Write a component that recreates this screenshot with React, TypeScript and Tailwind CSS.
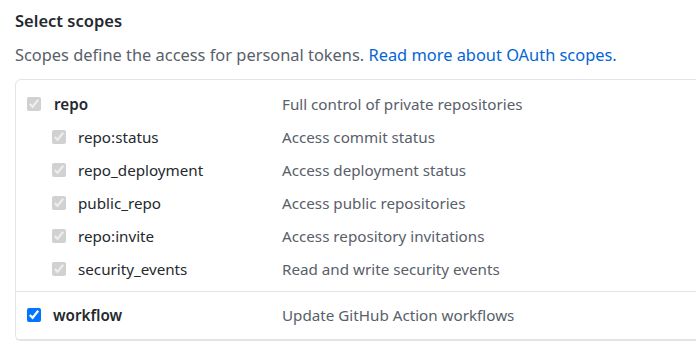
import React from "react";

type Scope = { name: string; desc: string };

const repoScopes: Scope[] = [
  { name: "repo:status", desc: "Access commit status" },
  { name: "repo_deployment", desc: "Access deployment status" },
  { name: "public_repo", desc: "Access public repositories" },
  { name: "repo:invite", desc: "Access repository invitations" },
  { name: "security_events", desc: "Read and write security events" },
];

function Check({ checked, disabled }: { checked?: boolean; disabled?: boolean }) {
  return (
    <input
      type="checkbox"
      defaultChecked={checked}
      disabled={disabled}
      className="m-0 w-[14px] h-[14px] shrink-0 accent-[#0075ff]"
    />
  );
}

export default function App() {
  return (
    <div
      className="w-[696px] h-[343px] overflow-hidden bg-white text-[#24292e]"
      style={{ fontFamily: '"Noto Sans", "Open Sans", sans-serif' }}
    >
      <div className="pl-[15px] pt-[7px]">
        <h3 className="text-[16.5px] font-semibold leading-[28px]">Select scopes</h3>
        <p className="mt-[6px] text-[16.4px] leading-[28px] text-[#586069]">
          Scopes define the access for personal tokens.{" "}
          <a href="#" className="text-[#0366d6]">
            Read more about OAuth scopes.
          </a>
        </p>

        {/* Scopes box */}
        <div className="mt-[10px] w-[760px] border border-[#e1e4e8] rounded-[6px] text-[15.2px]">
          {/* repo group */}
          <div className="border-b border-[#e1e4e8] pt-[8px] pb-[5px] pl-[11px]">
            <div className="flex items-center h-[33px]">
              <div className="flex items-center gap-[13px] w-[255px]">
                <Check checked disabled />
                <span className="font-semibold text-[#24292e]">repo</span>
              </div>
              <span className="text-[#586069]">Full control of private repositories</span>
            </div>
            {repoScopes.map((s) => (
              <div key={s.name} className="flex items-center h-[33px] pl-[25px]">
                <div className="flex items-center gap-[12px] w-[230px]">
                  <Check checked disabled />
                  <span className="text-[#24292e]">{s.name}</span>
                </div>
                <span className="text-[#586069]">{s.desc}</span>
              </div>
            ))}
          </div>

          {/* workflow group */}
          <div className="border-b border-[#e1e4e8] py-[7px] pl-[11px]">
            <div className="flex items-center h-[33px]">
              <div className="flex items-center gap-[12px] w-[255px]">
                <Check checked />
                <span className="font-semibold text-[#24292e]">workflow</span>
              </div>
              <span className="text-[#586069]">Update GitHub Action workflows</span>
            </div>
          </div>
        </div>
      </div>
    </div>
  );
}
